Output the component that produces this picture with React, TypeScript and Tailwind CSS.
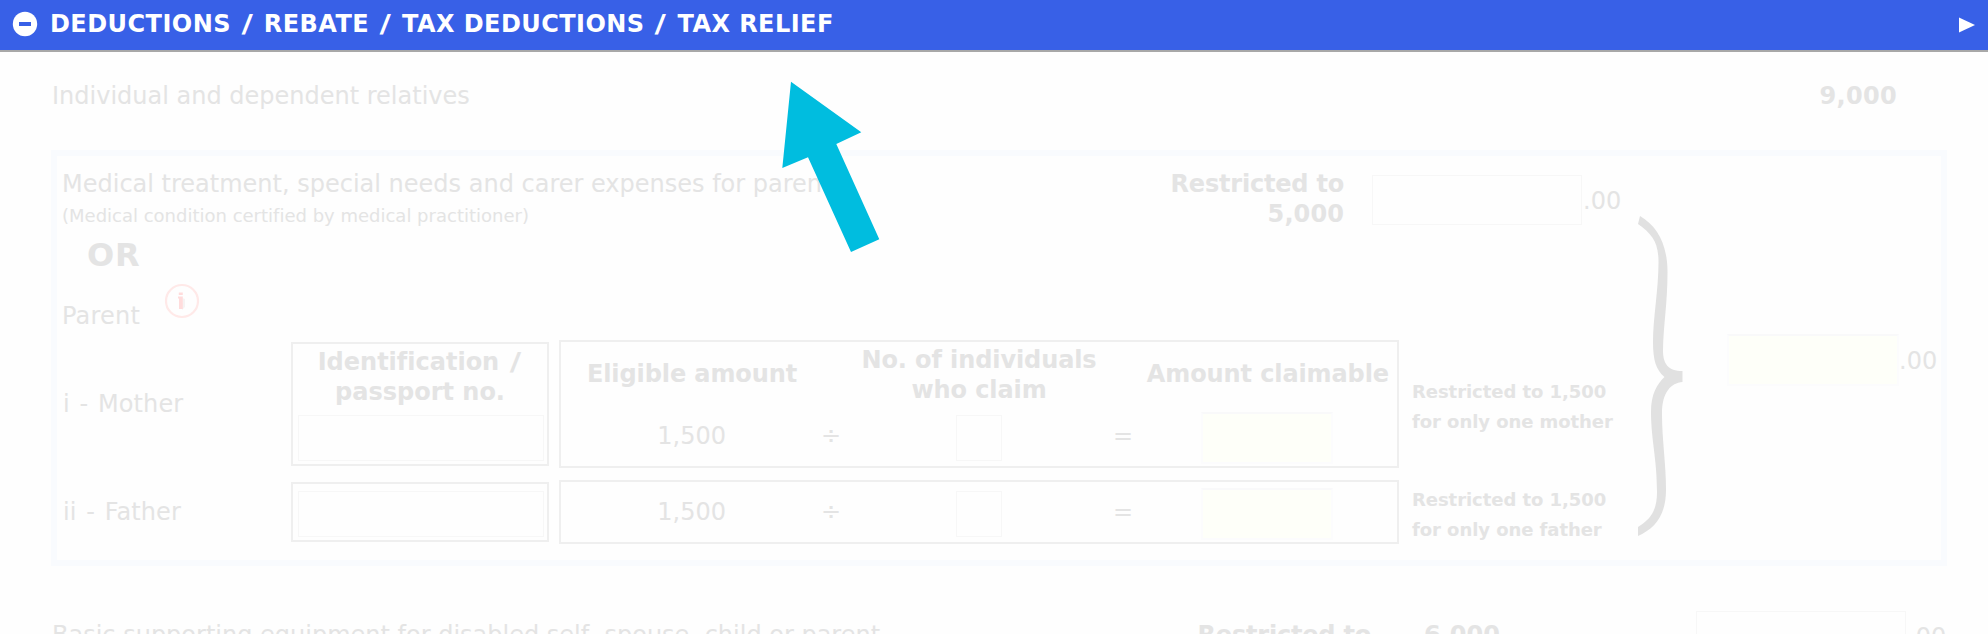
import React from "react";
import clsx from "clsx";

type ParentRow = {
  id: string;
  label: string;
  note: string;
  withHeader: boolean;
};

const rows: ParentRow[] = [
  { id: "mother", label: "i - Mother", note: "for only one mother", withHeader: true },
  { id: "father", label: "ii - Father", note: "for only one father", withHeader: false },
];

const MinusIcon = () => (
  <svg width="26" height="26" viewBox="0 0 26 26" className="shrink-0">
    <circle cx="13" cy="13" r="12.2" fill="#fff" />
    <rect x="7" y="11" width="12" height="4" fill="#3860e7" />
  </svg>
);

const InfoIcon = () => (
  <svg width="36" height="36" viewBox="0 0 36 36" className="shrink-0">
    <circle cx="18" cy="18" r="16" fill="none" stroke="#ffe9e8" strokeWidth="2.2" />
    <path d="M18.500 15l2.500 1v8l-3 3z" fill="#f6f3f3" />
    <path d="M14.800 9.500h4v2.500h-4zM14 13.500h4.800v12.500H15v-10.500h-1z" fill="#ffdcdc" />
  </svg>
);

const Brace = () => (
  <svg width="50" height="324" viewBox="0 0 50 324" className="shrink-0">
    <path
      d="M5 2C22 12 32.500 30 32.500 58C32.500 90 28.500 110 28 136C28 150 33 157 47.500 157V168C36 169 27 178 27 200C27 226 31 250 31 276C31 300 21 314 3 322V313C16 305 22 296 22 278C22 244 16 226 16 198C16 180 22 170 29.500 163C21 156 18 146 18 128C18 104 23.500 76 23.500 48C23.500 28 17 20 3 10Z"
      fill="#e1e1e1"
    />
  </svg>
);

// slightly wider than the font's own slash
const Slash = () => <span className="mx-[3px] inline-block scale-x-[1.3]">/</span>;

const Field = ({ className, computed }: { className?: string; computed?: boolean }) => (
  <div
    className={clsx(
      "shrink-0 border",
      computed ? "border-2 border-[#fcfcfd] border-t-[#f9f9fa] bg-[#fefff9]" : "border-[#f7f7f7] bg-[#fefefe]",
      className
    )}
  />
);

const CalcRow = () => (
  <div className="flex h-[52px] items-center">
    <div className="-mt-[4px] w-[165px] text-right">1,500</div>
    <div className="-mt-[4px] ml-[95px] w-[20px]">÷</div>
    <Field className="ml-[115px] h-[46px] w-[46px]" />
    <div className="-mt-[4px] ml-[111px] w-[20px]">=</div>
    <Field computed className="ml-[68px] h-[52px] w-[132px]" />
  </div>
);

const App: React.FC = () => {
  return (
    <div className="relative h-[634px] w-[1988px] overflow-hidden bg-[#fefefe] font-['DejaVu_Sans',Verdana,sans-serif] text-[24px] leading-[30px] whitespace-nowrap text-[#e4e4e4] [font-variant-ligatures:none]">
      <header className="flex h-[52px] justify-between border-b-2 border-[#a8a8a8] bg-[#3860e7] text-white">
        <div className="flex pl-3 pt-[11px]">
          <MinusIcon />
          <h1 className="-mt-[2px] ml-3 font-bold tracking-[0.45px]">
            DEDUCTIONS <Slash /> REBATE <Slash /> TAX DEDUCTIONS <Slash /> TAX RELIEF
          </h1>
        </div>
        <svg width="18" height="16" viewBox="0 0 18 16" className="mr-3 mt-[17px]">
          <path d="M1 .5L17 8L1 15.500Z" fill="#fff" />
        </svg>
      </header>

      <div className="flex h-[98px] justify-between pt-[29px] pl-[52px] pr-[91px]">
        <span>Individual and dependent relatives</span>
        <span className="font-bold tracking-[0.3px]">9,000</span>
      </div>

      <section className="ml-[51px] flex h-[416px] w-[1896px] border-6 border-[#f9fbfe]">
        <div className="w-[1569px] shrink-0">
          <div className="flex h-[72px]">
            <div className="w-[1000px] pl-[5px] pt-[13px]">
              <p>Medical treatment, special needs and carer expenses for parents</p>
              <p className="mt-[5px] text-[18px] leading-[24px]">(Medical condition certified by medical practitioner)</p>
            </div>
            <div className="w-[287px] pt-[13px] text-right font-bold">
              <p className="tracking-[-0.2px]">Restricted to</p>
              <p className="tracking-[0.1px]">5,000</p>
            </div>
            <Field className="ml-[28px] mt-[19px] h-[50px] w-[210px]" />
            <span className="ml-px mt-[30px]">.00</span>
          </div>
          <div className="h-[47px] pl-[30px] pt-[7px] text-[32px] leading-[40px] font-bold tracking-[0.8px]">OR</div>
          <div className="flex h-[65px] pl-[5px]">
            <span className="w-[102px] pt-[26px] tracking-[0.2px]">Parent</span>
            <div className="pt-[8px]">
              <InfoIcon />
            </div>
          </div>

          <div className="flex flex-col gap-3">
            {rows.map((row) => (
              <div key={row.id} className={clsx("flex", row.withHeader ? "h-[128px]" : "h-[64px]")}>
                <div
                  className={clsx(
                    "w-[234px] pl-[6px] tracking-[0.1px] [word-spacing:2px]",
                    row.withHeader ? "pt-[49px]" : "pt-[17px]"
                  )}
                >
                  {row.label}
                </div>
                <div className="my-[2px] w-[258px] border-2 border-[#efefef] px-[5px]">
                  {row.withHeader && (
                    <div className="pt-[3px] text-center font-bold">
                      Identification <Slash />
                      <br />
                      passport no.
                    </div>
                  )}
                  <Field className={clsx("h-[46px] w-[246px]", row.withHeader ? "mt-[8px]" : "mt-[7px]")} />
                </div>
                <div className="ml-[10px] w-[840px] border-2 border-[#efefef]">
                  {row.withHeader && (
                    <div className="flex h-[70px] items-center font-bold">
                      <div className="-mt-[7px] w-[262px] text-center tracking-[-0.1px]">Eligible amount</div>
                      <div className="-mt-[4px] w-[312px] text-center tracking-[-0.1px]">
                        No. of individuals
                        <br />
                        who claim
                      </div>
                      <div className="-mt-[7px] w-[262px] pr-[8px] text-right tracking-[-0.1px]">Amount claimable</div>
                    </div>
                  )}
                  <div className={row.withHeader ? "" : "pt-[6px]"}>
                    <CalcRow />
                  </div>
                </div>
                <div className={clsx("pl-[13px] text-[18px] font-bold", row.withHeader ? "pt-[37px]" : "pt-[5px]")}>
                  <span className="tracking-[-0.06px]">Restricted to 1,500</span>
                  <br />
                  <span className="tracking-[-0.06px]">{row.note}</span>
                </div>
              </div>
            ))}
          </div>
        </div>

        <div className="w-[101px] shrink-0 pl-[9px] pt-[58px]">
          <Brace />
        </div>
        <div className="flex pt-[178px]">
          <Field computed className="h-[52px] w-[172px]" />
          <span className="mt-[12px]">.00</span>
        </div>
      </section>

      <div className="flex pl-[52px] pt-[45px]">
        <span className="mt-[9px] w-[1138px]">Basic supporting equipment for disabled self, spouse, child or parent</span>
        <span className="mt-[9px] w-[181px] text-right font-bold tracking-[-0.2px]">Restricted to</span>
        <span className="mt-[9px] ml-[53px] w-[272px] font-bold">6,000</span>
        <Field className="h-[50px] w-[210px]" />
        <span className="mt-[11px] ml-[2px]">.00</span>
      </div>

      {/* pointer towards the section title */}
      <svg width="100" height="174" viewBox="0 0 100 174" className="absolute left-[781px] top-[81px]">
        <path d="M10 .8L80.300 51.300L55.300 63L98.300 158.300L70 171L27 76.200L1.300 87Z" fill="#00bddf" />
      </svg>
    </div>
  );
};

export default App;
